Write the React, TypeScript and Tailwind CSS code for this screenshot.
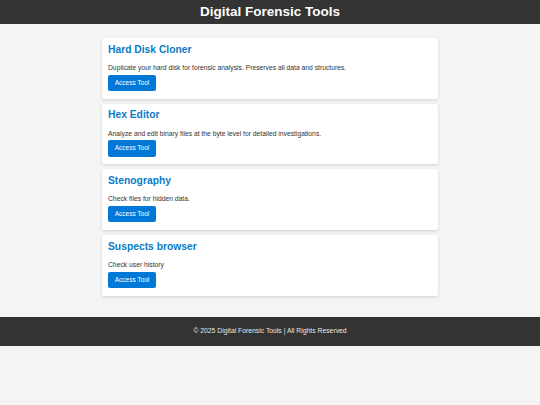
const tools = [
  { title: "Hard Disk Cloner", desc: "Duplicate your hard disk for forensic analysis. Preserves all data and structures." },
  { title: "Hex Editor", desc: "Analyze and edit binary files at the byte level for detailed investigations." },
  { title: "Stenography", desc: "Check files for hidden data." },
  { title: "Suspects browser", desc: "Check user history" },
]

export default function App() {
  return (
    <div className="min-h-[405px] bg-[#f4f4f4] font-['Liberation_Sans',Arial,sans-serif]">
      <header className="flex h-6 items-center justify-center bg-[#333]">
        <h1 className="text-[13.5px] font-bold leading-none text-white">Digital Forensic Tools</h1>
      </header>

      <main className="mx-auto flex w-[336px] flex-col gap-[5px] pt-[14px] pb-[21px]">
        {tools.map(t => (
          <div key={t.title} className="flex h-[60.7px] flex-col rounded-[2px] bg-white px-[6px] pt-[5.5px] shadow-[0_1px_3px_rgba(0,0,0,0.15)]">
            <h2 className="text-[10.3px] font-bold leading-[12px] text-[#0a7bc6]">{t.title}</h2>
            <p className="mt-[8.5px] text-[6.75px] leading-[8px] text-[#333]">{t.desc}</p>
            <button className="mt-[2.5px] h-[16.5px] w-[48px] rounded-[2px] bg-[#0078d7] text-[6.5px] leading-none text-white">
              Access Tool
            </button>
          </div>
        ))}
      </main>

      <footer className="flex h-[29px] items-center justify-center bg-[#333]">
        <p className="text-[6.8px] leading-none text-[#e6e6e6]">© 2025 Digital Forensic Tools | All Rights Reserved</p>
      </footer>
    </div>
  )
}
